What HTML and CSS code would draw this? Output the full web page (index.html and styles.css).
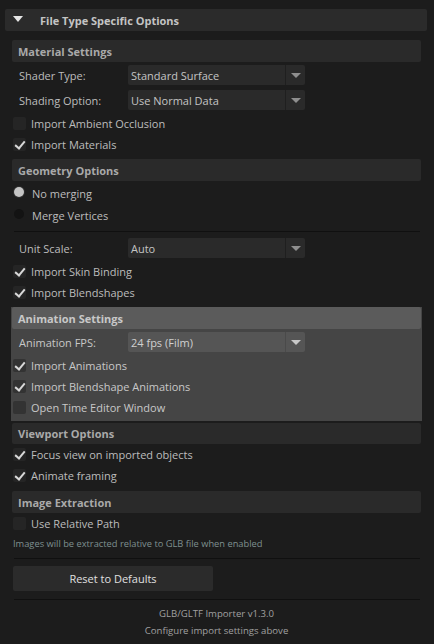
FILE: index.html
```html
<!DOCTYPE html>
<html>
<head>
<meta charset="utf-8">
<link rel="stylesheet" href="styles.css">
</head>
<body>
<div class="main">
  <div class="frame-header">
    <span class="tri"></span>
    <span class="frame-title">File Type Specific Options</span>
  </div>
  <div class="content">
    <div class="sec-head">Material Settings</div>
    <div class="dd-row first">
      <span class="dd-label">Shader Type:</span>
      <div class="dd"><span class="dd-val">Standard Surface</span><span class="dd-arrow"></span></div>
    </div>
    <div class="dd-row">
      <span class="dd-label">Shading Option:</span>
      <div class="dd"><span class="dd-val">Use Normal Data</span><span class="dd-arrow"></span></div>
    </div>
    <div class="cb-row"><span class="cb"></span><span>Import Ambient Occlusion</span></div>
    <div class="cb-row"><span class="cb on"></span><span>Import Materials</span></div>

    <div class="sec-head gap">Geometry Options</div>
    <div class="rb-row first"><span class="rb on"></span><span>No merging</span></div>
    <div class="rb-row"><span class="rb"></span><span>Merge Vertices</span></div>
    <div class="sep"></div>
    <div class="dd-row unit">
      <span class="dd-label">Unit Scale:</span>
      <div class="dd"><span class="dd-val">Auto</span><span class="dd-arrow"></span></div>
    </div>
    <div class="cb-row"><span class="cb on"></span><span>Import Skin Binding</span></div>
    <div class="cb-row"><span class="cb on"></span><span>Import Blendshapes</span></div>

    <div class="anim">
      <div class="sec-head hl">Animation Settings</div>
      <div class="dd-row first">
        <span class="dd-label">Animation FPS:</span>
        <div class="dd"><span class="dd-val">24 fps (Film)</span><span class="dd-arrow"></span></div>
      </div>
      <div class="cb-row"><span class="cb on"></span><span>Import Animations</span></div>
      <div class="cb-row"><span class="cb on"></span><span>Import Blendshape Animations</span></div>
      <div class="cb-row"><span class="cb"></span><span>Open Time Editor Window</span></div>
    </div>

    <div class="sec-head vp">Viewport Options</div>
    <div class="cb-row"><span class="cb on"></span><span>Focus view on imported objects</span></div>
    <div class="cb-row"><span class="cb on"></span><span>Animate framing</span></div>

    <div class="sec-head img">Image Extraction</div>
    <div class="cb-row"><span class="cb"></span><span>Use Relative Path</span></div>
    <div class="note">Images will be extracted relative to GLB file when enabled</div>
    <div class="sep low"></div>
    <div class="btn">Reset to Defaults</div>
    <div class="sep low2"></div>
    <div class="foot">GLB/GLTF Importer v1.3.0</div>
    <div class="foot">Configure import settings above</div>
  </div>
</div>
</body>
</html>
```

FILE: styles.css
```css
* { box-sizing: border-box; }
html, body { margin: 0; padding: 0; }
body {
  background: #1c1c1c;
  color: #bdbdbd;
  font-family: "Open Sans", "Noto Sans", sans-serif;
  font-size: 11px;
  width: 434px;
  height: 644px;
  overflow: hidden;
}
.main { padding: 9px 7px 0 5px; }
.frame-header {
  height: 22px;
  background: #2b2b2b;
  border-radius: 2px;
  display: flex;
  align-items: center;
}
.tri {
  width: 0; height: 0;
  margin-left: 8px;
  border-left: 5px solid transparent;
  border-right: 5px solid transparent;
  border-top: 6px solid #e6e6e6;
  margin-top: -2px;
}
.frame-title {
  margin-left: 17px;
  font-weight: bold;
  color: #c4c4c4;
}
.content { padding: 9px 6px 0 7px; }
.sec-head {
  height: 22px;
  background: #2a2a2a;
  border-radius: 2px;
  display: flex;
  align-items: center;
  padding-left: 6px;
  font-weight: bold;
  color: #a9a9a9;
}
.sec-head.gap { margin-top: 4px; }
.sec-head.img { margin-top: 5px; }
.sec-head.hl { background: #5b5b5b; color: #c8c8c8; }
.sec-head.vp { margin-top: 2px; height: 21px; }
.dd-row {
  display: flex;
  align-items: center;
  height: 20px;
  margin-top: 5px;
}
.dd-row.first { margin-top: 3px; }
.dd-row.unit { margin-top: 6px; }
.dd-label { width: 116px; padding-left: 7px; }
.dd {
  width: 177px;
  height: 20px;
  display: flex;
  background: #2a2a2a;
  border-radius: 2px;
}
.dd-val { flex: 1; padding-left: 3px; padding-top: 1px; line-height: 20px; color: #c4c4c4; }
.dd-arrow {
  width: 20px;
  border-left: 1px solid #1f1f1f;
  display: flex;
  align-items: center;
  justify-content: center;
}
.dd-arrow::after {
  content: "";
  border-left: 5px solid transparent;
  border-right: 5px solid transparent;
  border-top: 5px solid #8e8e8e;
}
.cb-row {
  display: flex;
  align-items: center;
  height: 21px;
}
.dd-row + .cb-row { margin-top: 3px; }
.cb {
  width: 13px; height: 13px;
  margin-left: 1px;
  margin-right: 5px;
  background: #252525;
  border-radius: 2px;
  position: relative;
}
.cb.on::after {
  content: "";
  position: absolute;
  left: 4px; top: 1px;
  width: 4px; height: 8px;
  border-right: 2px solid #d8d8d8;
  border-bottom: 2px solid #d8d8d8;
  transform: rotate(40deg);
}
.rb-row {
  display: flex;
  align-items: center;
  height: 22px;
}
.rb-row.first { margin-top: 1px; }
.rb {
  width: 10px; height: 10px;
  border-radius: 50%;
  margin-left: 2px;
  margin-right: 8px;
  margin-top: -2px;
  background: #131313;
}
.rb.on { background: #c4c4c4; box-shadow: 0 0 0 1px #2e2e2e; }
.sep { height: 1px; background: #101010; margin: 5px 1px 0 2px; }
.anim {
  background: #454545;
  margin: 4px -1px 0 -1px;
  padding: 0 1px 3px 1px;
}
.anim .dd { background: #555555; }
.anim .dd-arrow { border-left-color: #4a4a4a; }
.anim .dd-arrow::after { border-top-color: #c8c8c8; }
.anim .dd-val { color: #d0d0d0; }
.anim .cb { background: #333333; }
.anim .dd-label { color: #c8c8c8; }
.anim .cb-row { color: #c8c8c8; }
.note {
  font-size: 9.3px;
  color: #7f9090;
  padding-left: 1px;
  height: 15px;
  line-height: 15px;
  margin-top: 2px;
}
.sep.low { margin-top: 7px; }
.btn {
  width: 200px;
  height: 25px;
  margin-top: 7px;
  margin-left: 1px;
  background: #2b2b2b;
  border-radius: 2px;
  display: flex;
  align-items: center;
  justify-content: center;
  color: #e0e0e0;
}
.sep.low2 { margin-top: 8px; }
.foot {
  text-align: center;
  font-size: 9.6px;
  color: #a0a0a0;
  height: 17px;
  line-height: 17px;
}
.sep.low2 + .foot { margin-top: 5px; }
```
